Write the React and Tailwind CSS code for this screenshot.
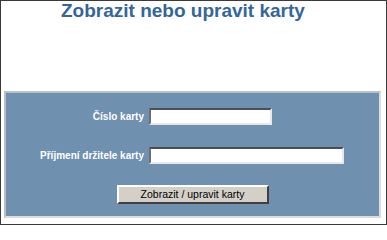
import React from 'react';

const font = { fontFamily: '"Liberation Sans", Arial, sans-serif' };

const Field = ({ label, width }) => (
  <div className="flex items-center">
    <label className="w-[143px] pr-[5px] text-right text-[10px] font-bold text-white leading-[16px]">
      {label}
    </label>
    <input
      type="text"
      className={`${width} h-[17px] bg-white border-2 border-t-[#4a4f57] border-l-[#6b6f76] border-b-[#e6e8ec] border-r-[#e6e8ec] outline-none`}
    />
  </div>
);

const App = () => {
  return (
    <div
      className="w-[387px] h-[225px] bg-white border border-[#3a3a3a] overflow-hidden"
      style={font}
    >
      <h1 className="pl-[60px] text-[19px] leading-[19px] font-bold text-[#336699]">
        Zobrazit nebo upravit karty
      </h1>

      <div className="mt-[71px] ml-[3px] w-[377px] h-[127px] bg-[#7090b0] border-2 border-t-[#b9c0ca] border-l-[#b9c0ca] border-b-[#d9dbde] border-r-[#d9dbde]">
        <div className="pt-[15px] flex flex-col gap-[22px]">
          <Field label="Číslo karty" width="w-[123px]" />
          <Field label="Příjmení držitele karty" width="w-[195px]" />
        </div>
        <div className="mt-[21px] flex justify-center">
          <button
            type="button"
            className="w-[152px] h-[19px] bg-[#d4d0c8] text-black text-[10.5px] leading-[15px] border-2 border-t-white border-l-white border-b-[#404040] border-r-[#404040]"
          >
            Zobrazit / upravit karty
          </button>
        </div>
      </div>
    </div>
  );
};

export default App;
